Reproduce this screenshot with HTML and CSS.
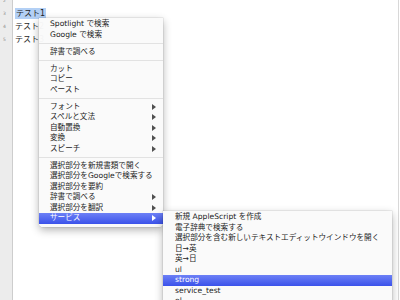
FILE: index.html
```html
<!DOCTYPE html>
<html lang="ja">
<head>
  <meta charset="UTF-8">
  <title>テキストエディット</title>
  <link rel="stylesheet" href="styles.css">
</head>
<body>
  <div class="editor">
    <div class="gutter">
      <div class="lines">
        <div class="num">2</div>
        <div class="num">3</div>
        <div class="num">4</div>
        <div class="num">5</div>
      </div>
    </div>
    <div class="text">
      <div class="lines">
        <div class="line"></div>
        <div class="line"><span class="sel">テスト1</span></div>
        <div class="line">テスト2</div>
        <div class="line">テスト3</div>
      </div>
    </div>
  </div>

  <!-- context menu -->
  <div class="menu main-menu">
    <div class="item">Spotlight で検索</div>
    <div class="item">Google で検索</div>
    <div class="sep"></div>
    <div class="item">辞書で調べる</div>
    <div class="sep"></div>
    <div class="item">カット</div>
    <div class="item">コピー</div>
    <div class="item">ペースト</div>
    <div class="sep"></div>
    <div class="item has-sub">フォント</div>
    <div class="item has-sub">スペルと文法</div>
    <div class="item has-sub">自動置換</div>
    <div class="item has-sub">変換</div>
    <div class="item has-sub">スピーチ</div>
    <div class="sep"></div>
    <div class="item">選択部分を新規書類で開く</div>
    <div class="item">選択部分をGoogleで検索する</div>
    <div class="item">選択部分を要約</div>
    <div class="item has-sub">辞書で調べる</div>
    <div class="item has-sub">選択部分を翻訳</div>
    <div class="item has-sub active">サービス</div>
  </div>

  <!-- services submenu -->
  <div class="menu sub-menu">
    <div class="item">新規 AppleScript を作成</div>
    <div class="item">電子辞典で検索する</div>
    <div class="item">選択部分を含む新しいテキストエディットウインドウを開く</div>
    <div class="item">日→英</div>
    <div class="item">英→日</div>
    <div class="item">ul</div>
    <div class="item active">strong</div>
    <div class="item">service_test</div>
    <div class="item">ol</div>
  </div>
</body>
</html>
```

FILE: styles.css
```css
html, body {
  margin: 0;
  padding: 0;
  height: 300px;
  overflow: hidden;
  background: #fff;
  font-family: "DejaVu Sans", "Noto Sans CJK JP", sans-serif;
}

.editor {
  display: flex;
  height: 300px;
  margin-right: 1px;
  border-right: 1px solid #d8d8d8;
}

.lines {
  margin-top: -6.5px;
}

.gutter {
  width: 12px;
  background: #ececec;
  border-right: 1px solid #cdcdcd;
}

.num {
  height: 13px;
  line-height: 13px;
  padding-left: 3px;
  font-size: 4.5px;
  color: #8a8a8a;
}

.text {
  flex: 1;
  padding-left: 2px;
}

.line {
  height: 13px;
  line-height: 13px;
  font-size: 8px;
  color: #1e1e1e;
}

.sel {
  background: #b3d0f5;
  padding: 1px 1px;
}

.menu {
  position: absolute;
  background: rgba(250, 250, 250, 0.97);
  box-shadow: 0 3px 9px rgba(0, 0, 0, 0.3), 0 0 0 0.5px rgba(0, 0, 0, 0.12);
  border-radius: 0 0 4px 4px;
  font-size: 7.6px;
  color: #1c1c1c;
}

.main-menu {
  left: 39px;
  top: 18px;
  width: 124px;
  padding: 1px 0 3px;
}

.sub-menu {
  left: 163px;
  top: 211px;
  width: 229px;
  padding: 1px 0 3px;
}

.item {
  height: 10.5px;
  line-height: 10.5px;
  padding: 0 7px 0 11px;
  display: flex;
  justify-content: space-between;
  align-items: center;
  white-space: nowrap;
}

.sub-menu .item {
  padding-left: 12px;
}

.item.has-sub::after {
  content: "";
  width: 0;
  height: 0;
  border-left: 4px solid #505050;
  border-top: 3px solid transparent;
  border-bottom: 3px solid transparent;
}

.item.active {
  background: linear-gradient(#6c80f6, #3b52ea);
  color: #fff;
}

.item.active.has-sub::after {
  border-left-color: #fff;
}

.sep {
  height: 1px;
  margin: 2.75px 0;
  background: #e2e2e2;
}
```
